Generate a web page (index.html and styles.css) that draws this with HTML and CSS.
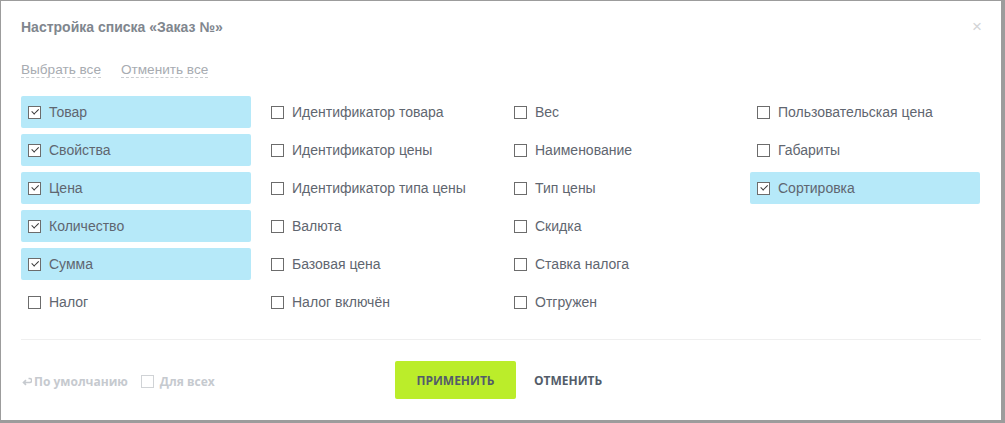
FILE: index.html
```html
<!DOCTYPE html>
<html lang="ru">
<head>
<meta charset="utf-8">
<title>Настройка списка</title>
<link rel="stylesheet" href="styles.css">
</head>
<body>
<div class="dialog">
  <div class="head">
    <div class="title">Настройка списка «Заказ №»</div>
    <div class="close">×</div>
  </div>
  <div class="links">
    <span class="link">Выбрать все</span>
    <span class="link">Отменить все</span>
  </div>
  <div class="grid">
    <div class="item on"><span class="cb"></span>Товар</div>
    <div class="item"><span class="cb"></span>Идентификатор товара</div>
    <div class="item"><span class="cb"></span>Вес</div>
    <div class="item"><span class="cb"></span>Пользовательская цена</div>

    <div class="item on"><span class="cb"></span>Свойства</div>
    <div class="item"><span class="cb"></span>Идентификатор цены</div>
    <div class="item"><span class="cb"></span>Наименование</div>
    <div class="item"><span class="cb"></span>Габариты</div>

    <div class="item on"><span class="cb"></span>Цена</div>
    <div class="item"><span class="cb"></span>Идентификатор типа цены</div>
    <div class="item"><span class="cb"></span>Тип цены</div>
    <div class="item on"><span class="cb"></span>Сортировка</div>

    <div class="item on"><span class="cb"></span>Количество</div>
    <div class="item"><span class="cb"></span>Валюта</div>
    <div class="item"><span class="cb"></span>Скидка</div>
    <div class="item empty"></div>

    <div class="item on"><span class="cb"></span>Сумма</div>
    <div class="item"><span class="cb"></span>Базовая цена</div>
    <div class="item"><span class="cb"></span>Ставка налога</div>
    <div class="item empty"></div>

    <div class="item"><span class="cb"></span>Налог</div>
    <div class="item"><span class="cb"></span>Налог включён</div>
    <div class="item"><span class="cb"></span>Отгружен</div>
    <div class="item empty"></div>
  </div>
  <div class="sep"></div>
  <div class="foot">
    <div class="foot-left">
      <span class="def"><svg width="10" height="9" viewBox="0 0 10 9"><path d="M6.5 1.5h1.2a1.5 1.5 0 0 1 0 4H1.8M4 3.2L1.5 5.5 4 7.8" fill="none" stroke="#c6cacf" stroke-width="1.6"/></svg>По умолчанию</span>
      <span class="all"><span class="cb2"></span>Для всех</span>
    </div>
    <div class="btns">
      <span class="btn apply">ПРИМЕНИТЬ</span>
      <span class="btn cancel">ОТМЕНИТЬ</span>
    </div>
  </div>
</div>
</body>
</html>
```
FILE: styles.css
```css
html, body { margin: 0; padding: 0; }
body {
  background: #9c9c9c;
  width: 1005px;
  height: 423px;
  overflow: hidden;
  font-family: "Liberation Sans", Arial, sans-serif;
}
.dialog {
  margin: 1px 0 0 1px;
  width: 1000px;
  height: 419px;
  background: #fff;
  box-sizing: border-box;
  padding: 0 20px 0 20px;
  position: relative;
}
.head {
  display: flex;
  justify-content: space-between;
  align-items: center;
  padding-top: 17px;
  height: 18px;
}
.title {
  font-weight: bold;
  font-size: 14px;
  color: #80868e;
}
.close {
  font-size: 17px;
  color: #d2d4d6;
  margin-right: -1px;
  line-height: 18px;
}
.links {
  margin-top: 26px;
  display: flex;
  gap: 20px;
  font-size: 13.6px;
  color: #a7abb1;
  height: 16px;
}
.link {
  border-bottom: 1px dashed #c9ccd0;
  line-height: 15px;
}
.grid {
  margin-top: 18px;
  display: grid;
  grid-template-columns: repeat(4, 230px);
  column-gap: 13px;
  row-gap: 6px;
}
.item {
  height: 32px;
  border-radius: 2px;
  display: flex;
  align-items: center;
  padding-left: 7px;
  font-size: 14px;
  color: #5f6670;
  gap: 8px;
}
.item.on { background: #b6e9f9; }
.cb {
  width: 11px;
  height: 11px;
  border: 1px solid #6c6c6c;
  background: #fff;
  position: relative;
  flex: none;
}
.item.on .cb::after {
  content: "";
  position: absolute;
  left: 2px;
  top: 1px;
  width: 6px;
  height: 3px;
  border-left: 1.5px solid #333;
  border-bottom: 1.5px solid #333;
  transform: rotate(-45deg) translate(0px, 1px);
}
.sep {
  margin-top: 21px;
  height: 1px;
  background: #efefef;
}
.foot {
  display: flex;
  align-items: center;
  margin-top: 21px;
  height: 38px;
}
.foot-left {
  display: flex;
  align-items: center;
  font-family: "Open Sans", sans-serif;
  font-weight: bold;
  font-size: 12px;
  color: #c6cacf;
  width: 373px;
  padding-left: 1px;
  padding-top: 2px;
}
.def { display: flex; align-items: center; gap: 2px; }
.all { display: flex; align-items: center; gap: 6px; margin-left: 13px; }
.cb2 {
  width: 11px;
  height: 11px;
  border: 1px solid #d0d3d6;
}
.btns { display: flex; align-items: center; }
.btn {
  font-family: "Open Sans", sans-serif;
  font-weight: bold;
  font-size: 12px;
  color: #535c69;
}
.apply {
  background: #bbed2a;
  width: 121px;
  height: 38px;
  border-radius: 2px;
  display: flex;
  align-items: center;
  justify-content: center;
}
.cancel { margin-left: 18px; }
```
